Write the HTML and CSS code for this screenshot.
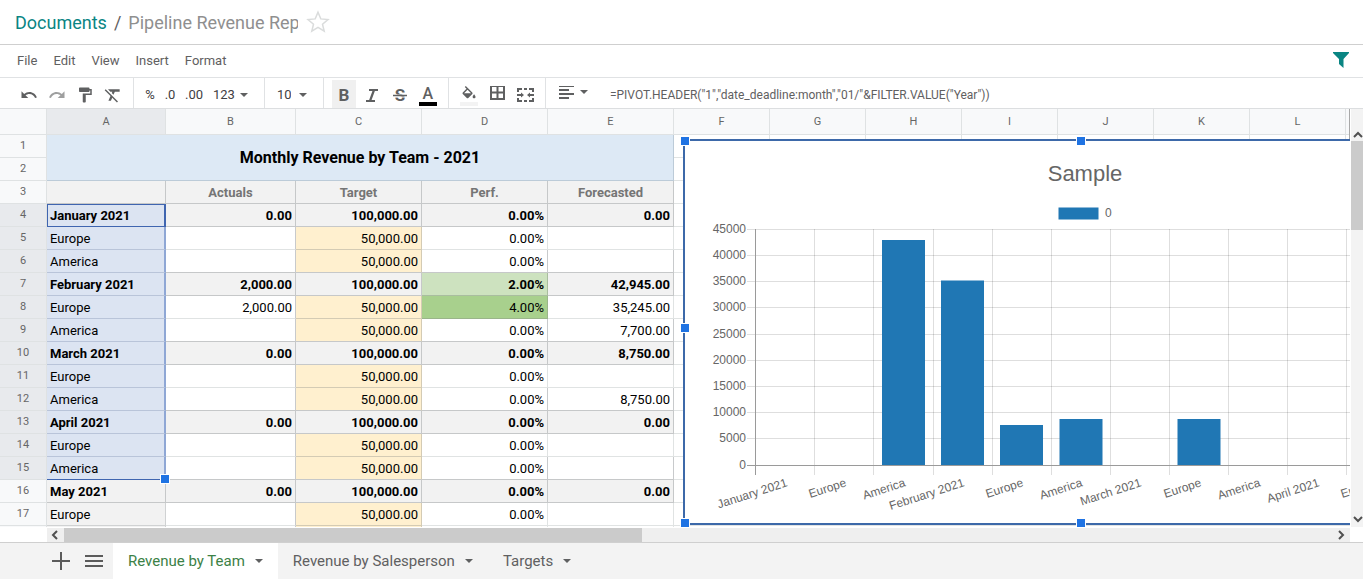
FILE: index.html
```html
<!DOCTYPE html>
<html lang="en">
<head>
<meta charset="utf-8">
<title>Pipeline Revenue Report</title>
<link rel="stylesheet" href="styles.css">
</head>
<body>
<header class="crumbs">
  <a class="crumb-link" href="#">Documents</a>
  <span class="crumb-sep">/</span>
  <input class="doc-name" type="text" aria-label="Document name" value="Pipeline Revenue Rep">
  <button class="star" aria-label="Favorite"><svg width="24" height="24" viewBox="0 0 24 24"><path d="M12 2.200l2.800 6.700 7.200.6-5.500 4.700 1.700 7L12 17.400 5.800 21.200l1.700-7L2 9.500l7.200-.6z" fill="none" stroke="#dadcdc" stroke-width="1.500"/></svg></button>
</header>
<nav class="menubar">
  <button>File</button><button>Edit</button><button>View</button><button>Insert</button><button>Format</button>
  <button class="filter" aria-label="Filters"><svg width="16" height="16" viewBox="0 0 16 16"><path d="M0 0h16v1L10.500 7v9L6 12V7L0 1z" fill="#0a8583"/></svg></button>
</nav>
<div class="toolbar">
  <div class="group g-edit">
    <button class="tool" aria-label="Undo"><svg width="18" height="18" viewBox="0 0 24 24"><path d="M12.500 8c-2.650 0-5.050.99-6.900 2.600L2 7v9h9l-3.620-3.620c1.390-1.160 3.160-1.880 5.120-1.880 3.540 0 6.550 2.310 7.600 5.500l2.370-.78C21.080 11.030 17.150 8 12.500 8z"/></svg></button>
    <button class="tool faded" aria-label="Redo"><svg width="18" height="18" viewBox="0 0 24 24"><path d="M18.400 10.600C16.550 8.990 14.150 8 11.500 8c-4.650 0-8.580 3.030-9.960 7.220L3.900 16c1.050-3.190 4.050-5.500 7.600-5.500 1.950 0 3.730.72 5.120 1.880L13 16h9V7l-3.600 3.600z"/></svg></button>
    <button class="tool" aria-label="Paint format"><svg width="18" height="18" viewBox="0 0 24 24"><path d="M18 4V3c0-.55-.45-1-1-1H5c-.55 0-1 .45-1 1v4c0 .55.45 1 1 1h12c.55 0 1-.45 1-1V6h1v4H9v11c0 .55.45 1 1 1h2c.55 0 1-.45 1-1v-9h8V4h-3z"/></svg></button>
    <button class="tool" aria-label="Clear format"><svg width="20" height="20" viewBox="0 0 24 24"><path d="M3.270 5L2 6.270l6.970 6.970L6.500 19h3l1.570-3.660L16.730 21 18 19.730 3.550 5.270 3.270 5zM6 5v.18L8.820 8h2.400l-.72 1.680 2.100 2.100L14.210 8H20V5H6z"/></svg></button>
  </div>
  <div class="group g-number">
    <button class="tool text">%</button><button class="tool text">.0</button><button class="tool text wide">.00</button><button class="tool text drop">123<i class="caret"></i></button>
  </div>
  <div class="group g-size">
    <select class="size" aria-label="Font size"><option>10</option></select><i class="caret"></i>
  </div>
  <div class="group g-style">
    <button class="tool on bold" aria-label="Bold">B</button>
    <button class="tool" aria-label="Italic"><svg width="18" height="18" viewBox="0 0 18 18"><path d="M6 4h9M3 15h9M11 4L7 15" fill="none" stroke="#5f6061" stroke-width="2.200"/></svg></button>
    <button class="tool" aria-label="Strikethrough"><svg width="18" height="18" viewBox="0 0 18 18"><text class="strike" x="9" y="15" text-anchor="middle">S</text><path d="M2 8h14v4H2z" fill="#fff" opacity=".5"/><path d="M2 9.500h14" stroke="#5f6061" stroke-width="1.500"/></svg></button>
    <button class="tool ink" aria-label="Text color"><span>A</span></button>
  </div>
  <div class="group g-fill">
    <button class="tool fill" aria-label="Fill color"><svg width="16" height="16" viewBox="1 0 22 22"><path d="M16.560 8.940L7.620 0 6.210 1.410l2.380 2.380-5.150 5.150c-.59.59-.59 1.540 0 2.120l5.500 5.500c.29.29.68.44 1.060.44s.77-.15 1.060-.44l5.500-5.500c.59-.58.59-1.530 0-2.120zM5.210 10L10 5.210 14.790 10H5.210zM19 11.500s-2 2.170-2 3.500c0 1.100.9 2 2 2s2-.9 2-2c0-1.330-2-3.500-2-3.500z"/></svg></button>
    <button class="tool" aria-label="Borders"><svg width="18" height="18" viewBox="0 0 18 18"><path d="M3 0h13v13H3zM9.500 0v13M3 6.500h13" fill="none" stroke="#5f6061" stroke-width="2"/></svg></button>
    <button class="tool" aria-label="Merge cells"><svg width="18" height="18" viewBox="0 0 18 18"><path d="M2 6V3h4M8 3h3M13 3h4v3M2 12v3h4M8 15h3M13 15h4v-3M1 9h4M18 9h-4" fill="none" stroke="#5f6061" stroke-width="2"/><path d="M5 6.500L8 9l-3 2.500zM14 6.500L11 9l3 2.500z"/></svg></button>
  </div>
  <div class="group g-align">
    <button class="tool drop" aria-label="Align"><svg width="16" height="18" viewBox="0 0 16 18"><path d="M1 0h15M1 4h10M1 8h15M1 12h10" fill="none" stroke="#5f6061" stroke-width="2"/></svg><i class="caret"></i></button>
  </div>
  <input class="formula" type="text" aria-label="Formula" value='=PIVOT.HEADER("1","date_deadline:month","01/"&amp;FILTER.VALUE("Year"))'>
</div>
<main class="sheet">
  <div class="pane">
    <table class="grid">
      <colgroup><col class="c-n"><col class="c-a"><col class="c-b"><col class="c-c"><col class="c-c"><col class="c-c"><col class="c-x"><col class="c-x"><col class="c-x"><col class="c-x"><col class="c-x"><col class="c-x"><col class="c-x"><col class="c-x"></colgroup>
      <thead><tr><th></th><th class="sel">A</th><th>B</th><th>C</th><th>D</th><th>E</th><th>F</th><th>G</th><th>H</th><th>I</th><th>J</th><th>K</th><th>L</th><th></th></tr></thead>
      <tbody>
        <tr><th>1</th><td class="title" colspan="5" rowspan="2">Monthly Revenue by Team - 2021</td><td></td><td></td><td></td><td></td><td></td><td></td><td></td><td></td></tr>
        <tr><th>2</th><td class="blank" colspan="8"></td></tr>
        <tr class="names"><th>3</th><td></td><td>Actuals</td><td>Target</td><td>Perf.</td><td>Forecasted</td><td colspan="8"></td></tr>
        <tr class="total picked active"><th>4</th><td>January 2021</td><td>0.00</td><td>100,000.00</td><td>0.00%</td><td>0.00</td><td colspan="8"></td></tr>
        <tr class="picked"><th>5</th><td>Europe</td><td></td><td>50,000.00</td><td>0.00%</td><td></td><td colspan="8"></td></tr>
        <tr class="picked pre"><th>6</th><td>America</td><td></td><td>50,000.00</td><td>0.00%</td><td></td><td colspan="8"></td></tr>
        <tr class="total picked"><th>7</th><td>February 2021</td><td>2,000.00</td><td>100,000.00</td><td class="good">2.00%</td><td>42,945.00</td><td colspan="8"></td></tr>
        <tr class="picked"><th>8</th><td>Europe</td><td>2,000.00</td><td>50,000.00</td><td class="best">4.00%</td><td>35,245.00</td><td colspan="8"></td></tr>
        <tr class="picked pre"><th>9</th><td>America</td><td></td><td>50,000.00</td><td>0.00%</td><td>7,700.00</td><td colspan="8"></td></tr>
        <tr class="total picked"><th>10</th><td>March 2021</td><td>0.00</td><td>100,000.00</td><td>0.00%</td><td>8,750.00</td><td colspan="8"></td></tr>
        <tr class="picked"><th>11</th><td>Europe</td><td></td><td>50,000.00</td><td>0.00%</td><td></td><td colspan="8"></td></tr>
        <tr class="picked pre"><th>12</th><td>America</td><td></td><td>50,000.00</td><td>0.00%</td><td>8,750.00</td><td colspan="8"></td></tr>
        <tr class="total picked"><th>13</th><td>April 2021</td><td>0.00</td><td>100,000.00</td><td>0.00%</td><td>0.00</td><td colspan="8"></td></tr>
        <tr class="picked"><th>14</th><td>Europe</td><td></td><td>50,000.00</td><td>0.00%</td><td></td><td colspan="8"></td></tr>
        <tr class="picked pre last"><th>15</th><td>America</td><td></td><td>50,000.00</td><td>0.00%</td><td></td><td colspan="8"></td></tr>
        <tr class="total"><th>16</th><td>May 2021</td><td>0.00</td><td>100,000.00</td><td>0.00%</td><td>0.00</td><td colspan="8"></td></tr>
        <tr><th>17</th><td>Europe</td><td></td><td>50,000.00</td><td>0.00%</td><td></td><td colspan="8"></td></tr>
        <tr><th></th><td></td><td></td><td></td><td></td><td></td><td colspan="8"></td></tr>
      </tbody>
    </table>
    <figure class="chart">
      <i class="handle top left"></i><i class="handle top center"></i><i class="handle middle left"></i><i class="handle bottom left"></i><i class="handle bottom center"></i>
      <svg width="792" height="382" viewBox="0 0 792 382">
        <g fill="none" stroke="#000" stroke-opacity=".13">
          <path d="M62 88.500H792M62 114.500H792M62 140.500H792M62 166.500H792M62 193.500H792M62 219.500H792M62 245.500H792M62 271.500H792M62 297.500H792"/>
          <path d="M129.500 88V334M188.500 88V334M248.500 88V334M307.500 88V334M366.500 88V334M425.500 88V334M484.500 88V334M543.500 88V334M602.500 88V334M661.500 88V334M720.500 88V334"/>
        </g>
        <g fill="#2077b4"><path d="M197 99h43v225h-43zM256 139.500h43V324h-43zM315 284h43v40h-43zM374.500 278h43v46h-43zM492.500 278h43v46h-43zM373.500 66.500h40v12h-40z"/></g>
        <path d="M70.500 88V334M62 324.500H792" fill="none" stroke="#9a9a9a"/>
        <text class="chart-title" x="400" y="40">Sample</text>
        <text x="420" y="76">0</text>
        <g class="y-axis"><text x="61" y="92">45000</text><text x="61" y="118">40000</text><text x="61" y="144">35000</text><text x="61" y="170">30000</text><text x="61" y="197">25000</text><text x="61" y="223">20000</text><text x="61" y="249">15000</text><text x="61" y="275">10000</text><text x="61" y="301">5000</text><text x="61" y="328">0</text></g>
        <g class="x-axis">
          <text transform="translate(103 345) rotate(-18)">January 2021</text>
          <text transform="translate(162 345) rotate(-18)">Europe</text>
          <text transform="translate(221 345) rotate(-18)">America</text>
          <text transform="translate(280 345) rotate(-18)">February 2021</text>
          <text transform="translate(339 345) rotate(-18)">Europe</text>
          <text transform="translate(398 345) rotate(-18)">America</text>
          <text transform="translate(457 345) rotate(-18)">March 2021</text>
          <text transform="translate(517 345) rotate(-18)">Europe</text>
          <text transform="translate(576 345) rotate(-18)">America</text>
          <text transform="translate(635 345) rotate(-18)">April 2021</text>
          <text transform="translate(694 345) rotate(-18)">Europe</text>
        </g>
      </svg>
    </figure>
  </div>
  <div class="vscroll">
    <svg class="arrow" width="12" height="12" viewBox="0 0 12 12"><path d="M3 8l4-4 4 4"/></svg>
    <div class="vthumb"></div>
    <svg class="arrow end" width="12" height="12" viewBox="0 0 12 12"><path d="M3 4l4 4 4-4"/></svg>
  </div>
  <div class="hscroll">
    <svg class="arrow" width="17" height="14" viewBox="0 0 17 14"><path d="M10 3L6 7l4 4"/></svg>
    <div class="hthumb"></div>
    <svg class="arrow end" width="17" height="14" viewBox="0 0 17 14"><path d="M6 3l4 4-4 4"/></svg>
  </div>
</main>
<footer class="tabs">
  <button class="tab-icon" aria-label="Add sheet"><svg width="20" height="20" viewBox="0 0 20 20"><path d="M10 1v18M1 10h18" stroke="#5b5b5b" stroke-width="2"/></svg></button>
  <button class="tab-icon" aria-label="List sheets"><svg width="20" height="20" viewBox="0 0 20 20"><path d="M1 5h18M1 10h18M1 15h18" stroke="#5b5b5b" stroke-width="2"/></svg></button>
  <button class="tab current">Revenue by Team<i class="caret"></i></button>
  <button class="tab">Revenue by Salesperson<i class="caret"></i></button>
  <button class="tab">Targets<i class="caret"></i></button>
</footer>
</body>
</html>
```
FILE: styles.css
```css
* { box-sizing: border-box; }
body { margin: 0; height: 100vh; display: flex; flex-direction: column; overflow: hidden; background: #fff; font-family: Roboto, "Liberation Sans", sans-serif; color: #5f6061; }
button, input, select { font: inherit; color: inherit; border: 0; padding: 0; margin: 0; background: none; outline: 0; }
button { display: flex; align-items: center; justify-content: center; }
svg { display: block; flex: none; }

.crumbs { height: 45px; flex: none; display: flex; align-items: center; padding: 0 15px; border-bottom: 1px solid #cfcfcf; font-size: 18px; }
.crumb-link { color: #0a8583; text-decoration: none; }
.crumb-sep { margin: 0 7px; }
.doc-name { width: 170px; color: #8f8f8f; }
.star { margin-left: 8px; }

.menubar { height: 33px; flex: none; display: flex; align-items: center; gap: 16px; padding: 0 14px 2px 17px; border-bottom: 1px solid #e0e2e4; font-size: 13px; }
.filter { margin-left: auto; }

.toolbar { height: 31px; flex: none; display: flex; border-bottom: 1px solid #dcdee0; }
.group { display: flex; flex: none; align-items: stretch; border-right: 1px solid #e0e2e4; }
.tool { width: 28px; padding-top: 3px; fill: #5f6061; }
.faded { opacity: .6; }
.text { width: 20px; font-size: 13px; color: #3f4042; }
.wide { width: 28px; }
.drop { width: auto; gap: 5px; }
.caret { flex: none; width: 0; border: 4px solid transparent; border-top-color: #5f6061; border-bottom: 0; }
.g-edit { padding: 0 6px 0 15px; }
.g-number { padding: 0 16px 0 6px; }
.g-number .drop { padding-left: 5px; }
.g-size { align-items: center; gap: 8px; padding: 3px 16px 0 12px; font-size: 13px; color: #3f4042; }
.size { appearance: none; width: 14px; }
.g-style { padding: 0 6px; }
.bold { width: 24px; margin: 2px 2px 0; padding-top: 2px; font-size: 17px; font-weight: 700; }
.on { background: #f0f0f0; }
.strike { font-size: 17px; font-weight: 700; fill: #5f6061; }
.ink span { width: 18px; border-bottom: 4px solid #000; font-size: 16px; line-height: 17px; font-weight: 500; }
.ink { padding-top: 4px; }
.g-fill { padding: 0 6px; }
.fill { flex-direction: column; padding-top: 6px; }
.fill::after { content: ""; width: 18px; height: 4px; background: #f3f3f3; }
.g-align { padding: 0 0 0 12px; border: 0; }
.g-align .drop { padding-top: 4px; gap: 6px; }
.g-align .caret { margin-bottom: 6px; }
.formula { flex: 1; min-width: 0; padding: 3px 0 0 22px; font-size: 12px; }

.sheet { flex: 1; min-height: 0; display: grid; grid-template-columns: minmax(0, 1fr) 12px; grid-template-rows: minmax(0, 1fr) 14px; column-gap: 1px; row-gap: 1px; }
.pane { position: relative; overflow: hidden; }
.pane::after { content: ""; position: absolute; top: 0; right: 0; width: 1px; height: 30px; background: #a8a8a8; }
.grid { table-layout: fixed; width: 1442px; border-collapse: separate; border-spacing: 0; font-size: 13px; line-height: 16px; color: #000; }
.c-n { width: 47px; }
.c-a { width: 119px; }
.c-b { width: 130px; }
.c-c { width: 126px; }
.c-x { width: 96px; }
.grid th { height: 23px; padding: 0; border: solid #dfe2e3; border-width: 0 1px 1px 0; background: #f8f9fa; color: #666; font-size: 11px; font-weight: 400; line-height: 16px; text-align: center; }
.grid thead th { height: 26px; }
.grid th.sel, .grid .picked th { background: #e8eaed; }
.grid td { height: 23px; padding: 2px 3px 0; border: solid #e0e3e3; border-width: 0 1px 1px 0; text-align: right; white-space: nowrap; }
.grid td:nth-child(2) { text-align: left; background: #f2f2f2; border-color: #d0d2d3; }
.grid td:nth-child(3), .pre td:not(:last-child) { border-right-color: #c8cacc; }
.grid td:nth-child(4) { background: #fff0cf; border-color: #d4cbb4; }
.grid td:nth-child(7), .grid td.blank { background: #fff; border-color: #e0e3e3; }
.total { font-weight: 700; }
.grid .total td:where(:nth-child(n+2):nth-child(-n+6)), .grid .names td:where(:nth-child(n+2):nth-child(-n+6)) { background-color: #f2f2f2; border-color: #c6c8c9; }
.grid .total td:nth-child(-n+6), .grid .names td:nth-child(-n+6) { background-color: #f2f2f2; border-color: #c6c8c9; }
.grid .pre td:nth-child(n+3):nth-child(-n+6) { border-bottom-color: #c6c8c9; }
.grid .names td { text-align: center; color: #757575; font-weight: 700; }
.grid tbody .title { background: #dde9f5; border-color: #bccbd8; padding: 0; text-align: center; font-size: 16px; font-weight: 700; }
.grid tr:first-child td:nth-child(n+3) { background: #fff; border-color: #e0e3e3; }
.grid .picked td:nth-child(2) { background: #dce4f2; border-color: #b9c4d9; border-right: 2px solid #8fa7d5; }
.grid .active td:nth-child(2) { border: solid #3f65b0; border-width: 1px 2px 1px 1px; padding: 1px 2px 0; }
.grid .last td:nth-child(2) { position: relative; border-bottom-color: #3f65b0; }
.grid .last td:nth-child(2)::after { content: ""; position: absolute; z-index: 1; right: -6px; bottom: -5px; width: 8px; height: 8px; border: 1px solid #fff; background: #1f73e3; }
.grid tbody .total .good { background: #cde2bf; border-color: #a9bd9f; }
.grid .best { background: #a8d08d; border-color: #9ab58a; }

.chart { position: absolute; left: 683px; top: 30px; margin: 0; border: 2px solid #3d69a9; background: #fff; font: 12px "Liberation Sans", Arial, sans-serif; fill: #666; }
.chart-title { font-size: 22px; text-anchor: middle; }
.y-axis, .x-axis { text-anchor: end; }
.handle { position: absolute; width: 10px; height: 10px; border: 1px solid #fff; background: #1f73e3; }
.top { top: -5px; }
.left { left: -5px; }
.center { left: calc(50% - 5px); }
.middle { top: 182px; }
.bottom { bottom: -5px; }

.vscroll { display: flex; flex-direction: column; padding-top: 20px; background: #f3f3f3; }
.vthumb { height: 89px; background: #cbcbcb; }
.arrow { fill: none; stroke: #505050; stroke-width: 2; }
.vscroll .end { margin-top: auto; margin-bottom: 2px; }
.hscroll { display: flex; margin-left: 47px; background: #efefef; }
.hthumb { width: 578px; background: #cbcbcb; }
.hscroll .end { margin-left: auto; }

.tabs { height: 37px; flex: none; display: flex; align-items: stretch; padding-left: 44px; border-top: 1px solid #cfcfcf; background: #f3f3f3; font-size: 15px; }
.tab-icon { width: 33px; }
.tab-icon + .tab { margin-left: 3px; }
.tab { gap: 10px; padding: 0 15px; }
.current { background: #fff; color: #3c8146; }
```
